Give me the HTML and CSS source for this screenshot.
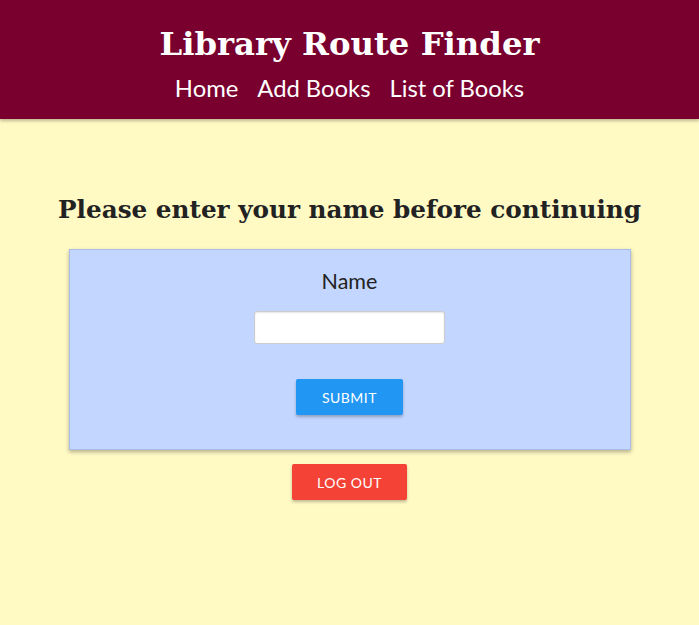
FILE: index.html
```html
<!DOCTYPE html>
<html>
<head>
<meta charset="utf-8">
<link rel="stylesheet" href="styles.css">
</head>
<body>
<header class="topbar">
  <h1 class="title">Library Route Finder</h1>
  <nav class="nav">
    <a href="#">Home</a>
    <a href="#">Add Books</a>
    <a href="#">List of Books</a>
  </nav>
</header>
<main class="main">
  <h2 class="prompt">Please enter your name before continuing</h2>
  <div class="card">
    <label class="label" for="name">Name</label>
    <input class="input" id="name" type="text">
    <button class="btn btn-blue">Submit</button>
  </div>
  <button class="btn btn-red">Log out</button>
</main>
</body>
</html>
```
FILE: styles.css
```css
html, body {
  margin: 0;
  padding: 0;
}
body {
  background: #fff9c4;
  font-family: Lato, "Liberation Sans", sans-serif;
  color: #222;
  min-height: 625px;
}
.topbar {
  background: #79002e;
  height: 119px;
  box-sizing: border-box;
  padding-top: 22px;
  text-align: center;
  box-shadow: 0 2px 3px rgba(0,0,0,0.25);
}
.title {
  margin: 0;
  font-family: "DejaVu Serif", serif;
  font-weight: bold;
  font-size: 32.3px;
  line-height: 44px;
  color: #fff;
}
.nav {
  display: flex;
  justify-content: center;
  gap: 19px;
  margin-top: 4px;
}
.nav a {
  color: #fff;
  text-decoration: none;
  font-size: 23.8px;
  line-height: 36px;
}
.main {
  display: flex;
  flex-direction: column;
  align-items: center;
}
.prompt {
  margin: 72px 0 0;
  font-family: "DejaVu Serif", serif;
  font-weight: bold;
  font-size: 24.7px;
  line-height: 38px;
  color: #222;
}
.card {
  margin-top: 20px;
  width: 562px;
  height: 201px;
  box-sizing: border-box;
  background: #c3d6ff;
  border: 1px solid #a9bde6;
  box-shadow: 0 2px 4px rgba(0,0,0,0.3);
  display: flex;
  flex-direction: column;
  align-items: center;
  padding-top: 17px;
}
.label {
  font-size: 21.5px;
  line-height: 28px;
  color: #222;
}
.input {
  margin-top: 16px;
  width: 191px;
  height: 33px;
  box-sizing: border-box;
  border: 1px solid #ccc;
  border-radius: 3px;
  background: #fff;
  box-shadow: inset 0 1px 2px rgba(0,0,0,0.1);
}
.btn {
  border: none;
  border-radius: 2px;
  color: #fff;
  font-family: Lato, "Liberation Sans", sans-serif;
  font-size: 14px;
  text-transform: uppercase;
  letter-spacing: 0.5px;
  height: 36px;
  box-shadow: 0 2px 3px rgba(0,0,0,0.25);
}
.btn-blue {
  margin-top: 35px;
  width: 107px;
  background: #2196f3;
}
.btn-red {
  margin-top: 14px;
  width: 115px;
  background: #f44336;
}
```
